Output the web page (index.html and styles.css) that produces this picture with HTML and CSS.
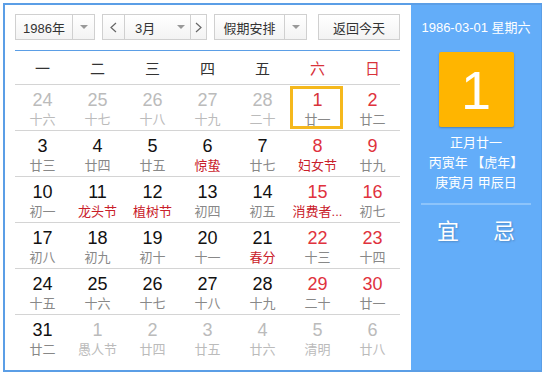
FILE: index.html
```html
<!DOCTYPE html>
<html lang="zh-CN">
<head>
    <meta charset="UTF-8">
    <title>万年历</title>
    <link rel="stylesheet" href="styles.css">
</head>
<body>
    <div class="calendar">
        <div class="main">
            <div class="toolbar">
                <div class="select year">
                    <span class="label">1986年</span>
                    <span class="arrow"><i></i></span>
                </div>
                <div class="select month">
                    <span class="nav">
                        <svg width="7" height="11" viewBox="0 0 7 11"><polyline points="6,1 1,5.5 6,10" fill="none" stroke="#666" stroke-width="1.2"/></svg>
                    </span>
                    <span class="label">3月</span>
                    <span class="arrow plain"><i></i></span>
                    <span class="nav">
                        <svg width="7" height="11" viewBox="0 0 7 11"><polyline points="1,1 6,5.5 1,10" fill="none" stroke="#666" stroke-width="1.2"/></svg>
                    </span>
                </div>
                <div class="select holiday">
                    <span class="label">假期安排</span>
                    <span class="arrow"><i></i></span>
                </div>
                <button class="today-btn">返回今天</button>
            </div>

            <div class="week">
                <span>一</span><span>二</span><span>三</span><span>四</span><span>五</span>
                <span class="red">六</span><span class="red">日</span>
            </div>

            <div class="days" id="days"></div>
        </div>

        <div class="side">
            <div class="side-date">1986-03-01 星期六</div>
            <div class="big-day">1</div>
            <div class="lunar-info">
                <p>正月廿一</p>
                <p>丙寅年 【虎年】</p>
                <p>庚寅月 甲辰日</p>
            </div>
            <div class="side-line"></div>
            <div class="yiji">
                <span>宜</span>
                <span>忌</span>
            </div>
        </div>
    </div>

    <script>
        // [day, lunar, other month, festival]
        const cells = [
            [24, '十六', 1], [25, '十七', 1], [26, '十八', 1], [27, '十九', 1], [28, '二十', 1], [1, '廿一'], [2, '廿二'],
            [3, '廿三'], [4, '廿四'], [5, '廿五'], [6, '惊蛰', 0, 1], [7, '廿七'], [8, '妇女节', 0, 1], [9, '廿九'],
            [10, '初一'], [11, '龙头节', 0, 1], [12, '植树节', 0, 1], [13, '初四'], [14, '初五'], [15, '消费者...', 0, 1], [16, '初七'],
            [17, '初八'], [18, '初九'], [19, '初十'], [20, '十一'], [21, '春分', 0, 1], [22, '十三'], [23, '十四'],
            [24, '十五'], [25, '十六'], [26, '十七'], [27, '十八'], [28, '十九'], [29, '二十'], [30, '廿一'],
            [31, '廿二'], [1, '愚人节', 1], [2, '廿四', 1], [3, '廿五', 1], [4, '廿六', 1], [5, '清明', 1], [6, '廿八', 1]
        ];

        const days = document.getElementById('days');
        let html = '';
        cells.forEach(function (c, i) {
            let cls = 'day';
            if (c[2]) cls += ' other';
            else if (i % 7 >= 5) cls += ' weekend';
            if (i === 5) cls += ' today';
            html += '<div class="' + cls + '"><span class="num">' + c[0] + '</span>' +
                '<span class="lunar' + (c[3] ? ' fest' : '') + '">' + c[1] + '</span></div>';
        });
        days.innerHTML = html;
    </script>
</body>
</html>
```

FILE: styles.css
```css
* {
    box-sizing: border-box;
    margin: 0;
    padding: 0;
}

body {
    margin: 3px;
    font-family: 'Liberation Sans', 'Noto Sans CJK SC', sans-serif;
    color: #333;
    background: #fff;
}

.calendar {
    display: flex;
    width: 540px;
    height: 369px;
    border: 2px solid #5b9ee6;
}

.main {
    width: 406px;
    padding: 9px 11px 0 10px;
    background: #fff;
}

.toolbar {
    display: flex;
    height: 26px;
    font-size: 13px;
}

.select {
    display: flex;
    align-items: center;
    height: 26px;
    border: 1px solid #d0d0d0;
    background: linear-gradient(#fff, #f3f3f3);
    color: #333;
}

.select .label {
    flex: 1;
    text-align: center;
}

.select .arrow {
    display: flex;
    align-items: center;
    justify-content: center;
    width: 22px;
    height: 100%;
    border-left: 1px solid #d0d0d0;
}

.select .arrow.plain {
    border-left: none;
    width: 18px;
}

.select .arrow i {
    width: 0;
    height: 0;
    border-left: 4px solid transparent;
    border-right: 4px solid transparent;
    border-top: 4px solid #999;
}

.year {
    width: 80px;
}

.month {
    width: 105px;
    margin-left: 7px;
}

.month .nav {
    display: flex;
    align-items: center;
    justify-content: center;
    width: 22px;
    height: 100%;
}

.month .nav:first-child {
    border-right: 1px solid #d0d0d0;
}

.month .nav:last-child {
    width: 16px;
    border-left: 1px solid #d0d0d0;
}

.month .label {
    text-align: left;
    padding-left: 10px;
}

.holiday {
    width: 93px;
    margin-left: 7px;
}

.today-btn {
    width: 82px;
    height: 26px;
    margin-left: 11px;
    border: 1px solid #d0d0d0;
    background: linear-gradient(#fff, #f3f3f3);
    font-family: inherit;
    font-size: 13px;
    color: #333;
}

.week {
    display: grid;
    grid-template-columns: repeat(7, 55px);
    height: 34px;
    margin-top: 10px;
    border-top: 1px solid #5b9ee6;
    font-size: 15px;
    color: #333;
}

.week span {
    display: flex;
    align-items: center;
    justify-content: center;
}

.week .red {
    color: #d8333b;
}

.days {
    display: grid;
    grid-template-columns: repeat(7, 55px);
    grid-auto-rows: 46px;
}

.day {
    position: relative;
    display: flex;
    flex-direction: column;
    align-items: center;
    padding-top: 4px;
    border-top: 1px solid #d4d4d4;
}

.day .num {
    font-size: 18px;
    line-height: 22px;
    color: #111;
}

.day .lunar {
    font-size: 13px;
    line-height: 18px;
    color: #888;
    white-space: nowrap;
}

.day .lunar.fest {
    color: #c9202a;
}

.day.weekend .num {
    color: #e0323d;
}

.day.other .num,
.day.other .lunar {
    color: #bbb;
}

.day.today .num {
    color: #d8333b;
}

.day.today::after {
    content: '';
    position: absolute;
    top: 1px;
    left: 0;
    right: 2px;
    bottom: 1px;
    border: 3px solid #f5b81d;
}

.side {
    flex: 1;
    display: flex;
    flex-direction: column;
    align-items: center;
    background: #63adf9;
    color: #fff;
}

.side-date {
    margin-top: 14px;
    font-size: 13px;
    line-height: 18px;
}

.big-day {
    display: flex;
    align-items: center;
    justify-content: center;
    width: 75px;
    height: 75px;
    margin-top: 15px;
    background: #ffb500;
    border-radius: 2px;
    box-shadow: 0 1px 2px rgba(0, 0, 0, 0.25);
    font-size: 54px;
    color: #fff;
}

.lunar-info {
    margin-top: 6px;
    text-align: center;
    font-size: 13px;
    line-height: 20px;
}

.side-line {
    width: 110px;
    height: 2px;
    margin-top: 10px;
    background: #8dc4fb;
}

.yiji {
    display: flex;
    gap: 34px;
    margin-top: 14px;
    font-size: 22px;
    line-height: 26px;
    text-shadow: 1px 1px 2px rgba(0, 0, 0, 0.2);
}
```
